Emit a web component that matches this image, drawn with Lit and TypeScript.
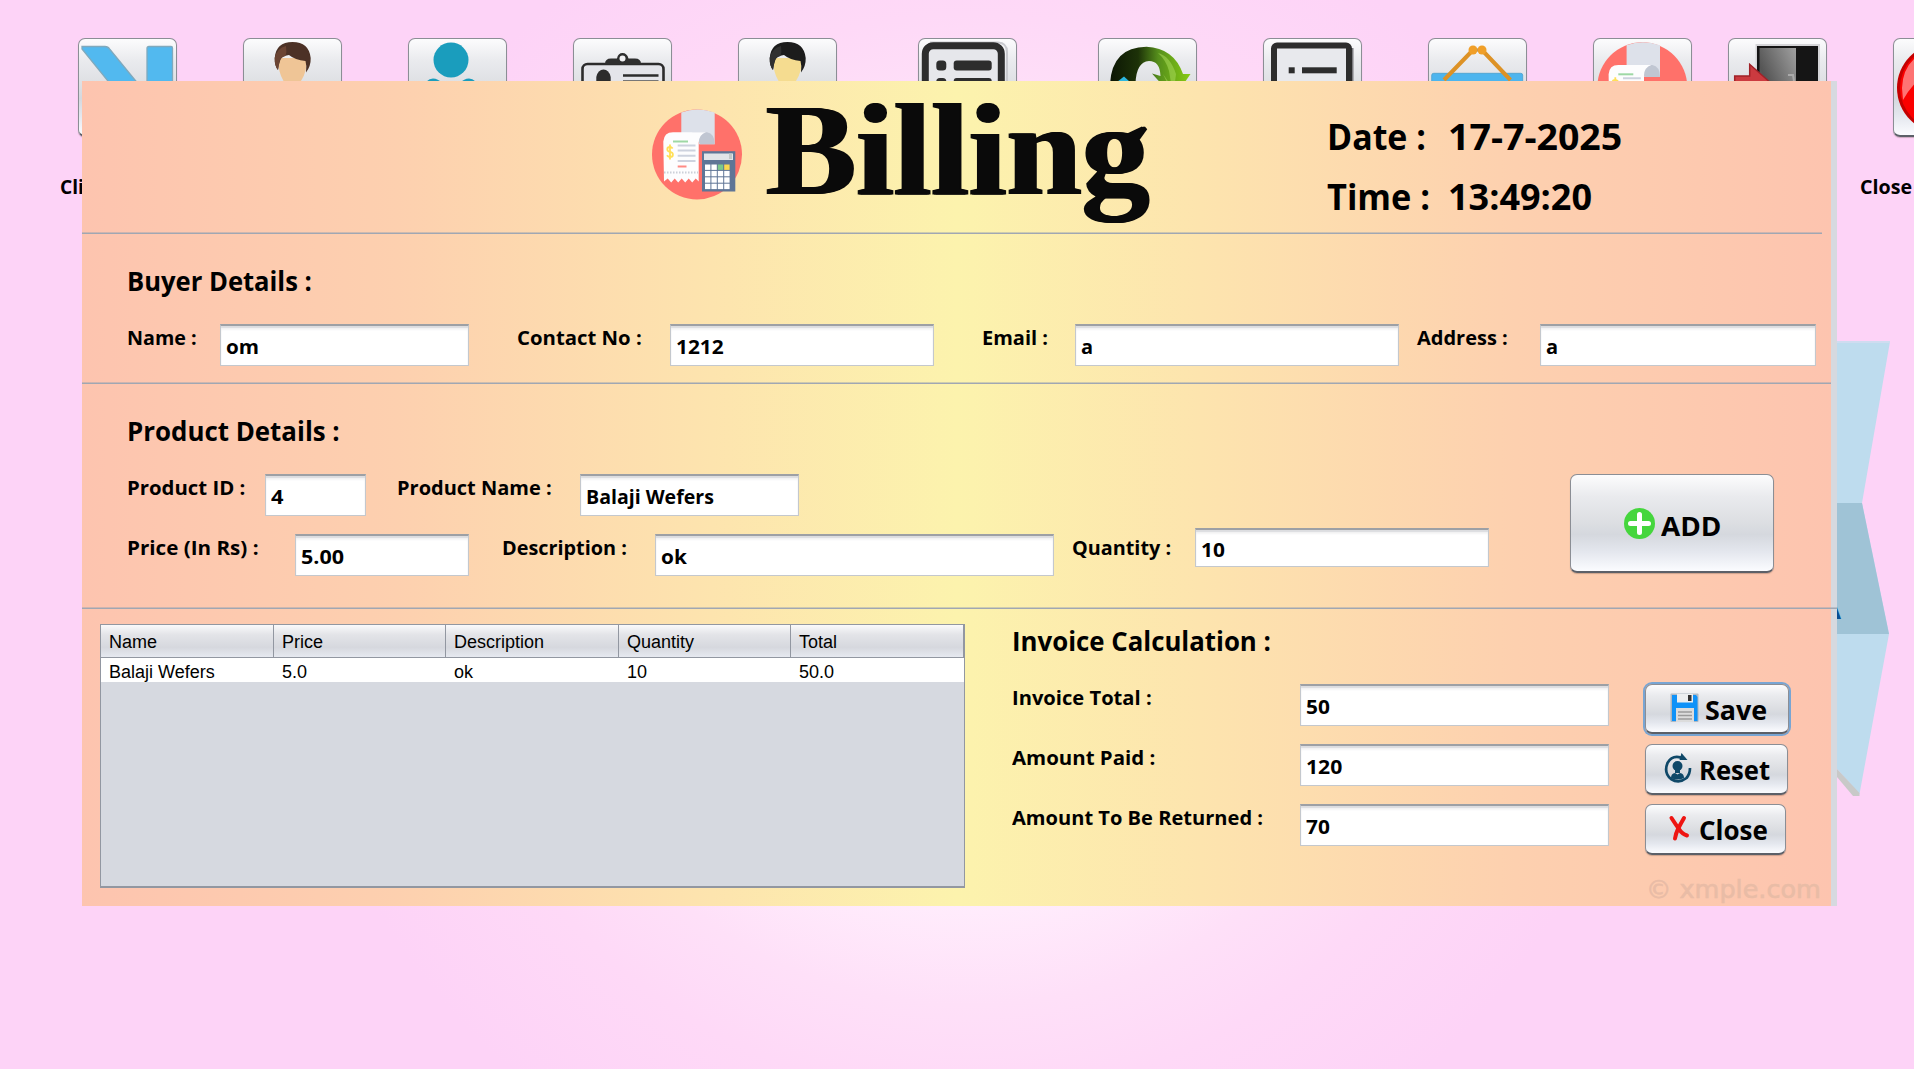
import { LitElement, html, svg, css } from "lit";
import { customElement, property } from "lit/decorators.js";

/** One line of text, stretched horizontally to a set width. */
@customElement("fit-text")
class FitText extends LitElement {
  @property({ type: Number }) w = 0;
  static styles = css`
    :host { display: block; white-space: pre; }
    .run { display: inline-block; transform-origin: 0 50%; }
  `;
  firstUpdated() {
    const el = this.renderRoot.querySelector(".run") as HTMLElement;
    const fit = () => {
      const natural = el.offsetWidth;
      if (natural && this.w) el.style.transform = `scaleX(${this.w / natural})`;
    };
    fit();
    document.fonts?.ready.then(fit);
  }
  render() {
    return html`<span class="run"><slot></slot></span>`;
  }
}

const billIcon = svg`
  <circle cx="45" cy="45" r="45" fill="#ff716a"/>
  <path d="M29.3 3Q45-3 62.7 3V34.7H47V24H29.3Z" fill="#dde1ea"/>
  <path d="M40 22.7H55Q62.7 24 62.7 34.7H48Z" fill="#c0c6d2"/>
  <path d="M11.300 32Q12 22.700 21 22.700H54Q47 25 46.700 33V72l-3-3-3.500 4-3.500-4-3.500 4-3.500-4-3.500 4-3.500-4-3.500 4-3.500-4-3.700 3Z" fill="#fdfdfe"/>
  <path d="M21 32H36" stroke="#9ed8a5" stroke-width="2"/>
  <path d="M25.7 36H43.5M25.7 41H43.5M25.7 46.3H43.5M25.7 51.5H43.5" stroke="#cdd2de" stroke-width="2"/>
  <path d="M25.7 57H34.5" stroke="#ff8a84" stroke-width="2"/>
  <path d="M12 63H46" stroke="#ccd0d8" stroke-width="2" stroke-dasharray="1.5 1.5"/>
  <path d="M20.7 39Q19.5 37.5 18 37.5Q15.3 37.5 15.3 39.8Q15.3 42 18 42.4Q20.9 42.8 20.9 45.2Q20.9 47.5 18 47.5Q16 47.5 15 45.8M18 35V50" fill="none" stroke="#ffdf57" stroke-width="1.8"/>
  <rect x="50" y="41.7" width="33.3" height="40.3" fill="#5f7596"/>
  <rect x="52" y="44" width="29" height="6.5" fill="#e2e5e8"/>
  <rect x="77" y="44" width="3" height="5.5" fill="#c3c8c8"/>
  ${[0, 1, 2, 3].map((r) =>
    [0, 1, 2, 3].map(
      (c) => svg`<rect x=${53 + c * 6.4} y=${55 + r * 6.4} width="5.4" height="5.4"
        fill=${r === 0 && c === 2 ? "#7dc98a" : r === 0 && c === 3 ? "#fbd84e" : "#fff"}/>`
    )
  )}`;

const person = (hair: string, hair2: string, skin: string) => svg`
  <path d="M35 20H64Q64 34 58 43Q56 48 49.500 48Q43 48 40.500 43Q35 34 35 20Z" fill=${skin}/>
  <path d="M35 32Q31.500 28 31.700 20Q33 4 49.500 4Q66 4 67.700 20Q68 28 63 34.500Q64 28 62.500 23Q52 22 46 17Q38 18 37 23Q35.500 26 35 32Z" fill=${hair}/>
  <path d="M35 32Q31.500 28 31.700 20Q34 10 43 8Q44 14 42.500 18Q37 19 36.500 24Z" fill=${hair2}/>`;

const toolbar = [
  {
    x: 78, art: svg`<g fill="#52b9ef" stroke="#7fa9bd" stroke-width="1.3">
      <path d="M4 8.500H27Q30 8.500 32 11.500L66 53V90H58L30 43L4 11Z"/><path d="M71 8.500H93Q94.500 8.500 94.500 10V90H69V10.500Q69 8.500 71 8.500Z"/></g>`,
  },
  { x: 243, art: person("#4c3126", "#6b4433", "#efc596") },
  {
    x: 408, art: svg`<g fill="#1a9dbd"><circle cx="43" cy="22" r="17.500"/>
      <path d="M14 50Q18 41 25 40.500Q30 40.500 34 45Q43 50 52 45Q56 40.500 61 40.500Q68 41 72 50V80H14Z"/></g>`,
  },
  {
    x: 573, art: svg`<rect x="9.500" y="26" width="81" height="60" rx="5" fill="#e4e5ea" stroke="#2c2c2c" stroke-width="2.600"/>
      <path d="M32 26Q32 20.500 38 20.500H44Q45 15 49.500 15Q54 15 55.500 20.500H62Q68 20.500 68 26Z" fill="#2f2f2f"/>
      <circle cx="49.500" cy="20.500" r="3" fill="#f2f2f4"/>
      <path d="M23.300 46V39Q25 31.500 30.500 31.500Q36 31.500 37.700 39V46Z" fill="#2c2c2c"/>
      <path d="M50 37.500H85.500" stroke="#2c2c2c" stroke-width="2.600"/><path d="M50 42.500H85.500" stroke="#777" stroke-width="1"/>`,
  },
  { x: 738, art: person("#1c1c1c", "#303030", "#f5dc90") },
  {
    x: 918, art: svg`<path d="M12 4.500H80Q89 5 89 14V90" fill="none" stroke="#c9cacf" stroke-width="2"/>
      <rect x="7.300" y="7.700" width="76" height="84" rx="8" fill="#e6e7eb" stroke="#2d2d2d" stroke-width="7"/>
      <g fill="#2d2d2d"><rect x="18.300" y="22.500" width="10" height="10" rx="3.500"/><rect x="35.700" y="22.500" width="38" height="10" rx="3"/>
      <rect x="18.300" y="40" width="10" height="10" rx="3.500"/><rect x="35.700" y="40" width="38" height="10" rx="3"/></g>`,
  },
  {
    x: 1098, art: svg`<defs><linearGradient id="arc" x1="0" x2="1"><stop offset="0" stop-color="#0c1604"/><stop offset=".35" stop-color="#1d3208"/><stop offset=".6" stop-color="#568f1c"/><stop offset="1" stop-color="#86cb13"/></linearGradient></defs>
      <path d="M12 46Q14 9 48.500 8.700Q76 10 85 36H92.500L76 60L54 35.500L62.500 38Q62 23 51 23Q38 24 37.500 46Z" fill="url(#arc)"/>
      <path d="M65 36L75 57L71 33Q68 22 60 15Q72 18 78 36L76 52Z" fill="#a8d85a" opacity=".55"/>
      <path d="M19 44L26 38.500L32 44Z" fill="#2cb7e0"/>`,
  },
  {
    x: 1263, art: svg`<path d="M88 10V90" stroke="#7a7a7e" stroke-width="5"/>
      <rect x="11" y="7.500" width="75" height="84" rx="3" fill="#e8e9ed" stroke="#2d2d2d" stroke-width="6"/>
      <g fill="#2d2d2d"><rect x="25.700" y="29.300" width="6" height="6"/><rect x="39" y="29.300" width="34.700" height="6"/></g>`,
  },
  {
    x: 1428, art: svg`<rect x="3.700" y="35.300" width="91" height="50" rx="2" fill="#4db5ee" stroke="#4a9fcc" stroke-width=".800"/>
      <path d="M16 42L45 12M82.500 42L54 12" stroke="#dd9226" stroke-width="4"/>
      <path d="M45 12H54" stroke="#8a8a8a" stroke-width="3"/>
      <circle cx="45" cy="12" r="4.500" fill="#f09f28"/><circle cx="54" cy="12" r="4.500" fill="#f09f28"/>`,
  },
  { x: 1593, art: svg`<g transform="translate(4.300 4.300)">${billIcon}</g>` },
  {
    x: 1728, art: svg`<defs><linearGradient id="door" x1="0" y1="1" x2="1" y2="0"><stop offset="0" stop-color="#777"/><stop offset=".4" stop-color="#555"/><stop offset="1" stop-color="#a0a0a0"/></linearGradient></defs>
      <rect x="27.500" y="6" width="64.500" height="88" fill="#d5d5d8"/>
      <rect x="29" y="8" width="61" height="86" fill="#151515"/><rect x="31.500" y="10" width="36.500" height="84" fill="url(#door)"/>
      <path d="M60 37H65L66 43" fill="none" stroke="#aaa" stroke-width="2"/>
      <path d="M6.700 38H21.700V26.300L45 47L21.700 68V56H6.700Z" fill="#cb3a3f" stroke="#a02228" stroke-width="1.500"/>`,
  },
  {
    x: 1893, art: svg`<circle cx="49" cy="50" r="45" fill="#c40000"/><circle cx="49" cy="50" r="42" fill="#fb0000"/>
      <path d="M9 50Q10 22 36 12V34Q20 44 10 62Z" fill="#ff9a9a" opacity=".75"/>`,
  },
];

type Field = { label: string; lw: number; col: number; w: number; value: string; vw: number; gap?: number; tall?: boolean };

const buyer: Field[] = [
  { label: "Name :", lw: 70, col: 93, w: 249, value: "om", vw: 33, gap: 48 },
  { label: "Contact No :", lw: 125, col: 153, w: 264, value: "1212", vw: 48, gap: 48 },
  { label: "Email :", lw: 66, col: 93, w: 324, value: "a", vw: 12, gap: 18 },
  { label: "Address :", lw: 91, col: 123, w: 276, value: "a", vw: 12 },
];
const product1: Field[] = [
  { label: "Product ID :", lw: 118, col: 138, w: 101, value: "4", vw: 12, gap: 31 },
  { label: "Product Name :", lw: 155, col: 183, w: 219, value: "Balaji Wefers", vw: 128 },
];
const product2: Field[] = [
  { label: "Price (In Rs) :", lw: 132, col: 168, w: 174, value: "5.00", vw: 43, gap: 33 },
  { label: "Description :", lw: 125, col: 153, w: 399, value: "ok", vw: 26, gap: 18 },
  { label: "Quantity :", lw: 99, col: 123, w: 294, value: "10", vw: 24, tall: true },
];
const invoice: Field[] = [
  { label: "Invoice Total :", lw: 140, col: 288, w: 309, value: "50", vw: 24 },
  { label: "Amount Paid :", lw: 143, col: 288, w: 309, value: "120", vw: 36 },
  { label: "Amount To Be Returned :", lw: 251, col: 288, w: 309, value: "70", vw: 24 },
];

const columns = [
  { title: "Name", cell: "Balaji Wefers", w: 173 },
  { title: "Price", cell: "5.0", w: 172 },
  { title: "Description", cell: "ok", w: 173 },
  { title: "Quantity", cell: "10", w: 172 },
  { title: "Total", cell: "50.0", w: 173 },
];

@customElement("app-root")
class AppRoot extends LitElement {
  static styles = css`
    :host {
      display: block; position: relative; width: 1914px; height: 1069px; overflow: hidden; color: #000;
      font: bold 20px/26px "Open Sans", "Noto Sans", sans-serif;
      background: radial-gradient(circle at 968px 555px, #fff 0, #ffecfc 350px, #fee0f8 450px, #fed9f7 540px, #fdd3f7 690px);
    }
    * { box-sizing: border-box; }
    svg { display: block; flex: none; overflow: visible; }
    .tool, .ribbon, .panel, .caption { position: absolute; }
    .tool { top: 38px; width: 99px; height: 99px; }
    .tool svg { margin: -1px; }
    .caption { top: 174px; }
    .caption.first { left: 60px; }
    .caption.last { left: 1860px; }
    .ribbon { left: 1780px; top: 341px; }
    .nimbus {
      border: 1px solid #8b8e95; border-bottom: 2px solid #5c6068; border-radius: 7px;
      background: linear-gradient(#fcfcfd 0, #eaebee 22%, #dcdee2 50%, #d5d8de 62%, #e4e7ee 80%, #fbfcff 100%);
      box-shadow: 0 1px 1px rgba(90, 70, 60, .3);
    }
    .panel {
      left: 82px; top: 81px; width: 1755px; height: 825px;
      border-right: 6px solid #d6d9df;
      background: linear-gradient(90deg, #fdc4af 0, #fdd0af 18%, #fde4ae 36%, #fcf3ad 50%, #fde4ae 64%, #fdd0af 82%, #fdc4af 100%);
    }
    .line { height: 2px; background: linear-gradient(rgba(150, 160, 175, .45) 50%, #a0a7b3 50%); }
    .line.short { width: 1740px; }
    .line.long { width: 1755px; }
    .head { display: flex; height: 151px; }
    .logo { margin: 28px 0 0 570px; }
    .brand {
      margin: 1px 0 0 24px; width: 383px; font: bold 131px/135px "Liberation Serif", serif; color: #0a0a0a;
      text-shadow: 1.5px 0 #0a0a0a, -1.5px 0 #0a0a0a;
    }
    .clock {
      display: grid; grid-template-columns: 121px auto; align-content: start; grid-auto-rows: 60px;
      margin: 26px 0 0 178px; font-size: 36px; line-height: 60px;
    }
    .sect { padding: 29px 0 0 45px; }
    .buyer { height: 148px; }
    .product { height: 223px; display: flex; }
    h2 { margin: 0 0 25px; font-size: 26px; line-height: 36px; }
    .row { display: flex; align-items: flex-start; height: 42px; margin-bottom: 18px; }
    .label { flex: none; padding-top: 1px; }
    .input {
      flex: none; height: 42px; padding: 1px 0 0 5px; line-height: 40px; background: #fff;
      border: 1px solid #c4c8cd; border-top: 2px solid #9da0a5;
      box-shadow: inset 0 2px 1px #dcdde0, inset 0 4px 2px #f4f4f5;
    }
    .input.low { margin-top: -6px; height: 39px; line-height: 37px; }
    button {
      display: flex; align-items: center; font: inherit; padding: 0; color: #000;
    }
    .add { width: 204px; height: 99px; margin: 61px 0 0 81px; padding-left: 53px; gap: 6px; font-size: 26px; }
    .add fit-text { padding-top: 5px; }
    .add svg { margin-top: 1px; }
    .bottom { display: flex; height: 297px; padding-left: 18px; }
    .table { width: 865px; height: 264px; margin-top: 15px; border: 1px solid #9297a1; border-bottom-width: 2px; background: #d6d9e0;
      font: 18px/28px "Liberation Sans", Arial, sans-serif; }
    .tr { display: flex; }
    .th {
      height: 33px; padding-left: 8px; line-height: 35px; border-right: 1px solid #9297a1; border-bottom: 1px solid #9297a1;
      background: linear-gradient(#fafafb, #e3e4e8 30%, #d6d8de 70%, #e6e9f0);
    }
    .td { height: 24px; padding-left: 8px; background: #fff; }
    .calc { margin-left: 47px; padding-top: 14px; width: 597px; }
    .actions { display: flex; flex-direction: column; align-items: flex-start; gap: 9px; margin: 75px 0 0 36px; font-size: 26px; }
    .act { height: 51px; }
    .act fit-text { padding-top: 2px; }
    .save { width: 144px; padding-left: 24px; gap: 6px; box-shadow: 0 0 0 2px #78a5d3; height: 50px; margin-bottom: 1px; }
    .reset { width: 143px; padding-left: 18px; gap: 7px; }
    .close { width: 141px; padding-left: 23px; gap: 10px; }
    .act svg { margin-top: -2px; }
    .mark { margin: 11px 0 0 1px; font: 24px/30px "DejaVu Sans", sans-serif; color: #e9bca6; height: 30px; -webkit-text-stroke: .6px #e9bca6; }
  `;

  private fields(list: Field[]) {
    return html`<div class="row">
      ${list.map(
        (f) => html`
          <div class="label" style="width:${f.col}px"><fit-text w=${f.lw}>${f.label}</fit-text></div>
          <div class="input ${f.tall ? "low" : ""}" style="width:${f.w}px;margin-right:${f.gap ?? 0}px">
            <fit-text w=${f.vw}>${f.value}</fit-text>
          </div>`
      )}
    </div>`;
  }

  render() {
    return html`
      ${toolbar.map(
        (t) => html`<div class="tool nimbus" style="left:${t.x}px"><svg width="99" height="99" viewBox="0 0 99 99">${t.art}</svg></div>`
      )}
      <div class="caption first"><fit-text w="24">Cli</fit-text></div>
      <div class="caption last"><fit-text w="52">Close</fit-text></div>
      <svg class="ribbon" width="110" height="460" viewBox="1780 341 110 460">
        <path d="M1780 341.500H1890L1862 503L1889 634L1859.500 794L1837 769H1780Z" fill="#bedcee"/>
        <path d="M1780 503H1862L1889 634H1780Z" fill="#9fc3d6"/>
        <path d="M1837 769L1859.500 793V796H1853L1837 777Z" fill="#c8c9c8"/>
        <path d="M1780 342H1890" stroke="#cfdcf0" stroke-width="2"/>
        <text x="1842" y="619" text-anchor="end" fill="#0a4f92" font-size="42" font-family="Liberation Sans" font-weight="bold">A</text>
      </svg>

      <main class="panel">
        <header class="head">
          <svg class="logo" width="90" height="91" viewBox="0 0 90 90">${billIcon}</svg>
          <fit-text class="brand" w="383">Billing</fit-text>
          <div class="clock">
            <fit-text w="99">Date :</fit-text><fit-text w="174">17-7-2025</fit-text>
            <fit-text w="103">Time :</fit-text><fit-text w="144">13:49:20</fit-text>
          </div>
        </header>
        <div class="line short"></div>
        <section class="sect buyer">
          <h2><fit-text w="185">Buyer Details :</fit-text></h2>
          ${this.fields(buyer)}
        </section>
        <div class="line"></div>
        <section class="sect product">
          <div>
            <h2><fit-text w="213">Product Details :</fit-text></h2>
            ${this.fields(product1)} ${this.fields(product2)}
          </div>
          <button class="add nimbus">
            <svg width="31" height="31" viewBox="0 0 31 31">
              <circle cx="15.500" cy="15.500" r="15.500" fill="#45d63d"/>
              <path d="M15.500 6.500V24.500M6.500 15.500H24.500" stroke="#fff" stroke-width="5" stroke-linecap="round"/>
            </svg>
            <fit-text w="60">ADD</fit-text>
          </button>
        </section>
        <div class="line long"></div>
        <section class="bottom">
          <div class="table">
            <div class="tr">${columns.map((c) => html`<div class="th" style="width:${c.w}px">${c.title}</div>`)}</div>
            <div class="tr">${columns.map((c) => html`<div class="td" style="width:${c.w}px">${c.cell}</div>`)}</div>
          </div>
          <div class="calc">
            <h2><fit-text w="259">Invoice Calculation :</fit-text></h2>
            ${invoice.map((f) => this.fields([f]))}
          </div>
          <div class="actions">
            <button class="act save nimbus">
              <svg width="29" height="30" viewBox="0 0 29 30">
                <rect x=".500" y=".500" width="28" height="28.500" rx="1" fill="#8b9aa8" opacity=".600"/>
                <path d="M2 2H26L27.500 4V28H2Z" fill="#0f92f8"/>
                <rect x="7" y="1" width="16" height="8.500" fill="#eceef0"/><rect x="18" y="2" width="3.500" height="6" fill="#333"/>
                <rect x="6" y="15" width="18" height="14" fill="#dcdcdc"/>
                <path d="M8 19H22M8 22.500H22M8 26H22" stroke="#9a9a9a" stroke-width="1.300"/>
              </svg>
              <fit-text w="62">Save</fit-text>
            </button>
            <button class="act reset nimbus">
              <svg width="28" height="30" viewBox="0 0 28 30" fill="#0f4868">
                <path d="M17 4.600Q8 2 3.500 10Q-.500 20 7 26Q15 31 22.500 25Q26 21 26 15" fill="none" stroke="#0f4868" stroke-width="2.700"/>
                <path d="M15.500 7L17.500 0L23.500 7Z"/>
                <circle cx="13.500" cy="13" r="5"/><path d="M11 16H16V20H11ZM7 25Q7 20.500 11 20L13.500 21.500L16 20Q20 20.500 20 25Q13.500 28 7 25Z"/>
              </svg>
              <fit-text w="71">Reset</fit-text>
            </button>
            <button class="act close nimbus">
              <svg width="20" height="25" viewBox="0 0 20 25" fill="none" stroke="#ee1512" stroke-linecap="round">
                <path d="M2.500 2Q7 9 10 13Q13 18 18 19.500" stroke-width="4"/><path d="M15 2Q11 9 9 13Q7 17 6 22.500" stroke-width="4"/>
              </svg>
              <fit-text w="69">Close</fit-text>
            </button>
            <div class="mark"><fit-text w="175">© xmple.com</fit-text></div>
          </div>
        </section>
      </main>
    `;
  }
}
